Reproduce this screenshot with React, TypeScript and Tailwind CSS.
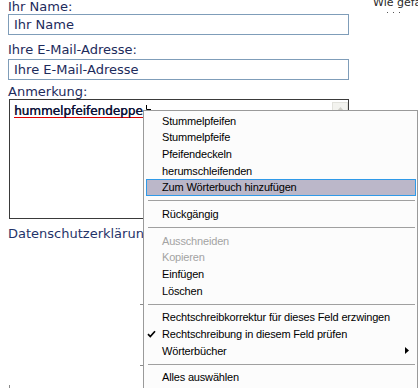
import React from "react";

type Item = { t: string; hl?: boolean; dis?: boolean; check?: boolean; sub?: boolean };

const groups: Item[][] = [
  [
    { t: "Stummelpfeifen" },
    { t: "Stummelpfeife" },
    { t: "Pfeifendeckeln" },
    { t: "herumschleifenden" },
    { t: "Zum Wörterbuch hinzufügen", hl: true },
  ],
  [{ t: "Rückgängig" }],
  [{ t: "Ausschneiden", dis: true }, { t: "Kopieren", dis: true }, { t: "Einfügen" }, { t: "Löschen" }],
  [
    { t: "Rechtschreibkorrektur für dieses Feld erzwingen" },
    { t: "Rechtschreibung in diesem Feld prüfen", check: true },
    { t: "Wörterbücher", sub: true },
  ],
  [{ t: "Alles auswählen" }],
];

function Row({ item }: { item: Item }) {
  if (item.hl) {
    return (
      <div className="flex items-center h-[16.67px] ml-[2px] mr-[1px] border border-[#2f9ae8] bg-[#bbb7c9]">
        <div className="w-[15px] shrink-0" />
        <span className="text-black">{item.t}</span>
      </div>
    );
  }
  return (
    <div className="flex items-center h-[16.67px]">
      <div className="w-[18px] shrink-0 flex items-center pl-[3px]">
        {item.check ? (
          <svg width="9" height="8" viewBox="0 0 9 8">
            <path d="M1 4.2 L3.3 6.6 L8 1.2" stroke="#000" strokeWidth="1.7" fill="none" />
          </svg>
        ) : null}
      </div>
      <span className={item.dis ? "text-[#a3a3a3]" : "text-black"}>{item.t}</span>
      {item.sub ? (
        <div className="ml-auto mr-[8px] flex items-center">
          <svg width="4" height="7" viewBox="0 0 4 7">
            <polygon points="0,0 4,3.5 0,7" fill="#000" />
          </svg>
        </div>
      ) : null}
    </div>
  );
}

function Separator() {
  return (
    <div className="h-[10px] flex items-center">
      <div className="ml-[4px] mr-[2px] h-px w-full bg-[#a0a0a0]" />
    </div>
  );
}

export default function App() {
  return (
    <div className="relative w-[418px] h-[388px] overflow-hidden bg-white font-['DejaVu_Sans',Verdana,sans-serif] text-[13px]">
      <div className="flex">
        <div className="pl-[8px] w-[349px] shrink-0 flex flex-col text-[#1d2b5c]">
          <div className="h-[14px] leading-[14px]">Ihr Name:</div>
          <div className="h-[21px] border border-[#7f9db9] pl-[5px] leading-[19px]">Ihr Name</div>
          <div className="h-[24px] pt-[8px] leading-[14px]">Ihre E-Mail-Adresse:</div>
          <div className="h-[21px] border border-[#7f9db9] pl-[5px] leading-[19px]">Ihre E-Mail-Adresse</div>
          <div className="h-[19px] pt-[5px] leading-[14px]">Anmerkung:</div>
          <div className="ml-[1px] h-[120px] border border-[#3a3a3a] flex">
            <div className="flex-1 pl-[4px] pt-[4px] text-[12px] leading-[15px] text-[#0c1238] [text-shadow:0.4px_0_0_#0c1238]">
              <span className="underline decoration-[#e00000] decoration-1 underline-offset-[2px]">hummelpfeifendeppe</span>
            </div>
            <div className="w-[16px] pt-[2px] flex flex-col">
              <div className="h-[16px] bg-[#f3f3ef] border border-[#e2e2dc] flex justify-center pt-[4px]">
                <svg width="7" height="4" viewBox="0 0 7 4">
                  <polygon points="0,4 3.5,0 7,4" fill="#cfcfc8" />
                </svg>
              </div>
            </div>
          </div>
          <div className="mt-[8px] leading-[14px] text-[#1f3369] whitespace-nowrap">Datenschutzerklärung</div>
          <div className="mt-[63px] ml-[132px] w-[6px] h-px bg-[#8a8a8a]" />
          <div className="mt-[60px] ml-[132px] w-[6px] h-px bg-[#8a8a8a]" />
          <div className="mt-[19px] ml-[1px] w-px h-[3px] bg-[#8a8a8a]" />
        </div>
        <div className="ml-[24px] flex flex-col">
          <div className="-mt-[4.5px] text-[11px] leading-[13px] text-[#2a2a2a] whitespace-nowrap">Wie gefällt</div>
          <div className="mt-[3px] ml-[14px] flex gap-[5px]">
            <div className="w-px h-px bg-[#555]" />
            <div className="w-px h-px bg-[#555]" />
            <div className="w-px h-px bg-[#555]" />
          </div>
        </div>
      </div>

      <svg className="absolute left-[146px] top-[105px]" width="5" height="5" viewBox="0 0 5 5">
        <path d="M0.5 0 V4.5 H5" stroke="#000" strokeWidth="1" fill="none" />
      </svg>

      <div className="absolute left-[143px] top-[110px] w-[275px] h-[290px] border border-[#9a9a9a] bg-[#fcfcfc] pt-[1.7px] font-['Liberation_Sans',Arial,sans-serif] text-[11px] tracking-[-0.17px] whitespace-nowrap">
        {groups.map((g, gi) => (
          <React.Fragment key={gi}>
            {gi > 0 ? <Separator /> : null}
            {g.map((it, ii) => (
              <Row key={ii} item={it} />
            ))}
          </React.Fragment>
        ))}
      </div>
    </div>
  );
}
